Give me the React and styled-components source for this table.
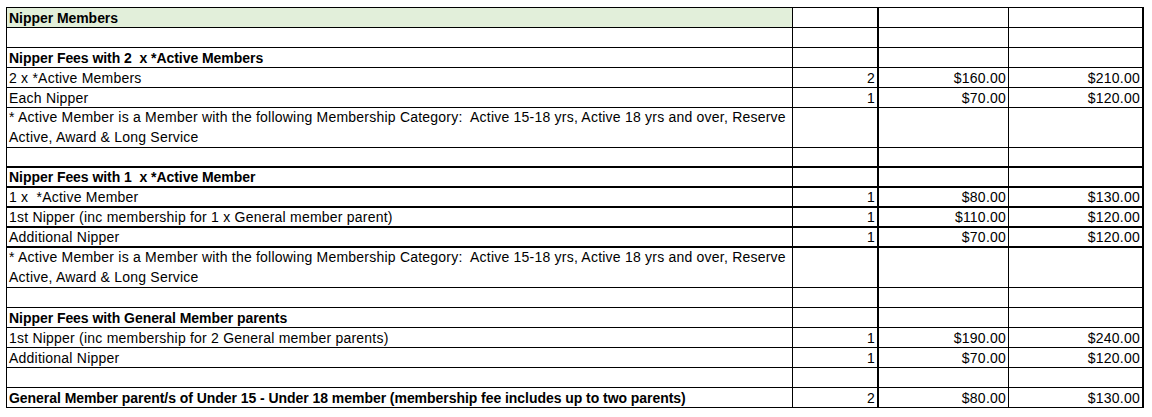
import React from 'react'
import styled, { createGlobalStyle } from 'styled-components'

const GlobalStyle = createGlobalStyle`
  html, body {
    margin: 0;
    padding: 0;
    background: #ffffff;
  }
  body {
    font-family: "Liberation Sans", Arial, sans-serif;
    color: #000000;
  }
`

const Page = styled.div`
  padding: 7px 0 0 6px;
`

const Sheet = styled.div`
  display: grid;
  grid-template-columns: 786px 86px 130px 135px;
  width: fit-content;
  border-top: 1px solid #000;
  border-left: 1px solid #000;
`

const Cell = styled.div`
  box-sizing: border-box;
  height: ${(p) => (p.tall ? 40 : 20)}px;
  border-bottom: ${(p) => (p.thick ? 2 : 1)}px solid #000;
  border-right: ${(p) => (p.heavyRight ? 2 : 1)}px solid #000;
  background: ${(p) => (p.green ? '#e2efda' : '#ffffff')};
  display: flex;
  flex-direction: column;
  justify-content: flex-end;
  align-items: ${(p) => (p.num ? 'flex-end' : 'flex-start')};
  padding: 0 2px 0 2px;
  font-size: 14px;
  letter-spacing: ${(p) => (p.bold ? '-0.05px' : '0.22px')};
  line-height: 18px;
  font-weight: ${(p) => (p.bold ? 700 : 400)};
  white-space: pre;
  overflow: hidden;
`

const Line = styled.span`
  display: block;
  height: 20px;
  line-height: 19px;
`

const rows = [
  { label: 'Nipper Members', bold: true, green: true },
  { label: '' },
  { label: 'Nipper Fees with 2  x *Active Members', bold: true },
  { label: '2 x *Active Members', qty: '2', a: '$160.00', b: '$210.00' },
  { label: 'Each Nipper', qty: '1', a: '$70.00', b: '$120.00' },
  { note: true },
  { label: '', thick: true },
  { label: 'Nipper Fees with 1  x *Active Member', bold: true, thick: true },
  { label: '1 x  *Active Member', qty: '1', a: '$80.00', b: '$130.00', thick: true },
  { label: '1st Nipper (inc membership for 1 x General member parent)', qty: '1', a: '$110.00', b: '$120.00', thick: true },
  { label: 'Additional Nipper', qty: '1', a: '$70.00', b: '$120.00', thick: true },
  { note: true },
  { label: '' },
  { label: 'Nipper Fees with General Member parents', bold: true },
  { label: '1st Nipper (inc membership for 2 General member parents)', qty: '1', a: '$190.00', b: '$240.00' },
  { label: 'Additional Nipper', qty: '1', a: '$70.00', b: '$120.00' },
  { label: '' },
  {
    label: 'General Member parent/s of Under 15 - Under 18 member (membership fee includes up to two parents)',
    bold: true,
    qty: '2',
    a: '$80.00',
    b: '$130.00',
  },
]

const Note = () => (
  <>
    <Line>* Active Member is a Member with the following Membership Category:  Active 15-18 yrs, Active 18 yrs and over, Reserve</Line>
    <Line>Active, Award &amp; Long Service</Line>
  </>
)

export default function App() {
  return (
    <Page>
      <GlobalStyle />
      <Sheet>
        {rows.map((r, i) => (
          <React.Fragment key={i}>
            <Cell tall={r.note} thick={r.thick} green={r.green} bold={r.bold}>
              {r.note ? <Note /> : r.label}
            </Cell>
            <Cell tall={r.note} thick={r.thick} num heavyRight>
              {r.qty}
            </Cell>
            <Cell tall={r.note} thick={r.thick} num>
              {r.a}
            </Cell>
            <Cell tall={r.note} thick={r.thick} num heavyRight>
              {r.b}
            </Cell>
          </React.Fragment>
        ))}
      </Sheet>
    </Page>
  )
}
